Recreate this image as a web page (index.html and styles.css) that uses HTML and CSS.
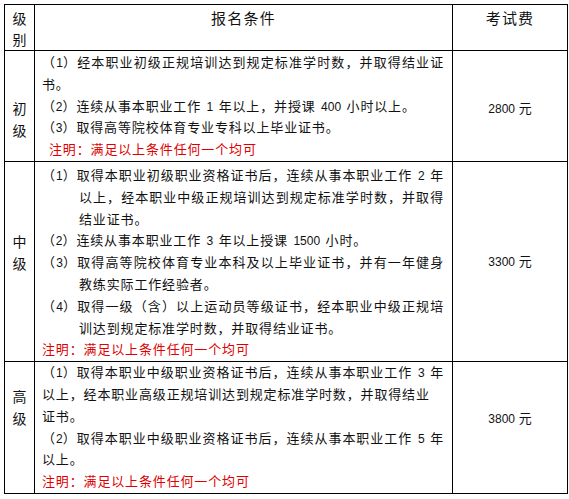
FILE: index.html
```html
<!DOCTYPE html>
<html lang="zh-CN">
<head>
<meta charset="utf-8">
<title>报名条件</title>
<link rel="stylesheet" href="styles.css">
</head>
<body>
<table class="grid">
<colgroup><col class="c-lv"><col class="c-req"><col class="c-fee"></colgroup>
<thead>
<tr class="head">
<th class="lv"><span class="ch">级</span><span class="ch">别</span></th>
<th class="req">报名条件</th>
<th class="fee">考试费</th>
</tr>
</thead>
<tbody>
<tr class="r1">
<td class="lv"><span class="ch">初</span><span class="ch">级</span></td>
<td class="req">
<span class="ln j">（<span class="n">1</span>）经本职业初级正规培训达到规定标准学时数，并取得结业证</span>
<span class="ln">书。</span>
<span class="ln">（<span class="n">2</span>）连续从事本职业工作 <span class="n">1</span> 年以上，并授课 <span class="n">400</span> 小时以上。</span>
<span class="ln">（<span class="n">3</span>）取得高等院校体育专业专科以上毕业证书。</span>
<span class="ln note ind">注明：满足以上条件任何一个均可</span>
</td>
<td class="fee"><span class="n">2800</span> 元</td>
</tr>
<tr class="r2">
<td class="lv"><span class="ch">中</span><span class="ch">级</span></td>
<td class="req">
<span class="ln j">（<span class="n">1</span>）取得本职业初级职业资格证书后，连续从事本职业工作 <span class="n">2</span> 年</span>
<span class="ln j hang">以上，经本职业中级正规培训达到规定标准学时数，并取得</span>
<span class="ln hang">结业证书。</span>
<span class="ln">（<span class="n">2</span>）连续从事本职业工作 <span class="n">3</span> 年以上授课 <span class="n">1500</span> 小时。</span>
<span class="ln j">（<span class="n">3</span>）取得高等院校体育专业本科及以上毕业证书，并有一年健身</span>
<span class="ln hang">教练实际工作经验者。</span>
<span class="ln j">（<span class="n">4</span>）取得一级（含）以上运动员等级证书，经本职业中级正规培</span>
<span class="ln hang">训达到规定标准学时数，并取得结业证书。</span>
<span class="ln note">注明：满足以上条件任何一个均可</span>
</td>
<td class="fee"><span class="n">3300</span> 元</td>
</tr>
<tr class="r3">
<td class="lv"><span class="ch">高</span><span class="ch">级</span></td>
<td class="req">
<span class="ln j">（<span class="n">1</span>）取得本职业中级职业资格证书后，连续从事本职业工作 <span class="n">3</span> 年</span>
<span class="ln">以上，经本职业高级正规培训达到规定标准学时数，并取得结业</span>
<span class="ln">证书。</span>
<span class="ln j">（<span class="n">2</span>）取得本职业中级职业资格证书后，连续从事本职业工作 <span class="n">5</span> 年</span>
<span class="ln">以上。</span>
<span class="ln note">注明：满足以上条件任何一个均可</span>
</td>
<td class="fee"><span class="n">3800</span> 元</td>
</tr>
</tbody>
</table>
</body>
</html>
```
FILE: styles.css
```css
html, body {
  margin: 0;
  padding: 0;
  background: #fff;
}

body {
  font-family: "Liberation Sans", "Noto Sans CJK SC", sans-serif;
  color: #111;
}

.grid {
  border-collapse: collapse;
  table-layout: fixed;
  width: 563px;
  margin: 4px 0 0 4px;
}

.c-lv { width: 30px; }
.c-req { width: 418px; }
.c-fee { width: 115px; }

.grid th,
.grid td {
  border: 1px solid #000;
  padding: 0;
  vertical-align: top;
  font-weight: 400;
}

.head { height: 44px; }
.r1 { height: 111px; }
.r2 { height: 200px; }
.r3 { height: 132px; }

.head th {
  line-height: 21px;
  height: 40px;
  padding-top: 3px;
  text-align: center;
  overflow: hidden;
}

.head .lv { font-size: 14px; }

.head .ch {
  height: 21px;
}

.head .req,
.head .fee {
  font-size: 15px;
  letter-spacing: 1.2px;
}

.ch {
  display: block;
  height: 22px;
  line-height: 22px;
}

td.lv {
  font-size: 14px;
  line-height: 22px;
  text-align: center;
}

.r1 td.lv { padding-top: 47px; }
.r2 td.lv { padding-top: 69px; }
.r3 td.lv { padding-top: 24px; }

td.req {
  font-size: 13px;
  line-height: 21.8px;
  letter-spacing: 0.85px;
  word-spacing: 1px;
  padding-left: 7px;
  padding-right: 8px;
  text-align: left;
}

.r1 td.req { padding-top: 1px; }
.r2 td.req { padding-top: 3px; }
.r3 td.req { padding-top: 0; }

.ln {
  display: block;
  height: 21.8px;
}

.j {
  text-align: justify;
  text-align-last: justify;
}

.hang { padding-left: 37px; }
.ind { padding-left: 7px; }

.note { color: #e00000; }

.n {
  font-size: 12px;
  letter-spacing: 0;
}

td.fee {
  font-size: 13px;
  line-height: 22px;
  text-align: center;
}

.r1 td.fee { padding-top: 47px; }
.r2 td.fee { padding-top: 89px; }
.r3 td.fee { padding-top: 46px; }
```
